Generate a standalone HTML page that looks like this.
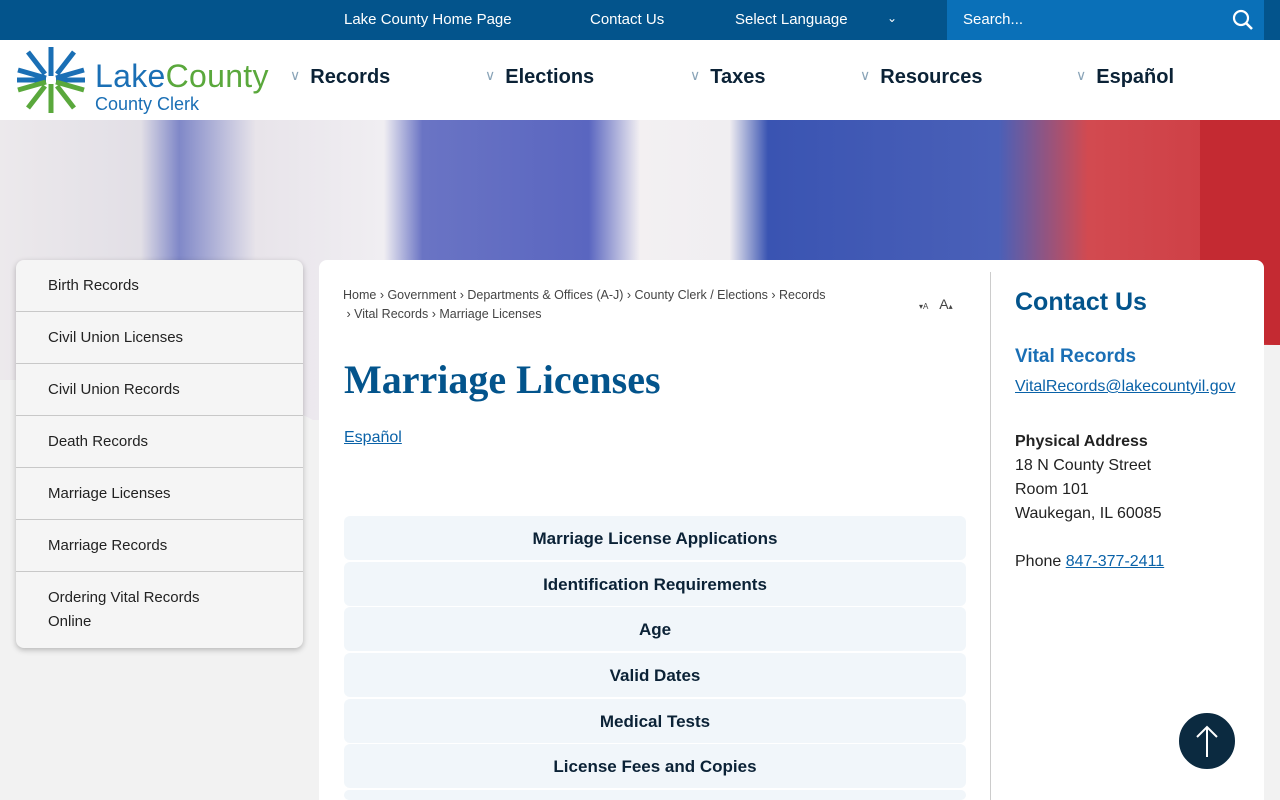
<!DOCTYPE html>
<html style="overflow:hidden;height:800px"><head><meta charset="utf-8"><style>
*{box-sizing:border-box;margin:0;padding:0}
body{width:1280px;height:800px;overflow:hidden;font-family:"Liberation Sans",sans-serif;background:#f2f2f2;position:relative}
.top{position:absolute;left:0;top:0;width:1280px;height:40px;background:#03548c;color:#fff;font-size:15px}
.top span{position:absolute;top:11px}
.search{position:absolute;left:947px;top:0;width:317px;height:40px;background:#0a70b8}
.hdr{position:absolute;top:40px;left:0;width:1280px;height:80px;background:#fff}
.nav{position:absolute;top:26px;font-size:20px;font-weight:bold;color:#0b2236}
.nav i{font-style:normal;color:#8aa4b8;font-weight:normal;font-size:14px;margin-right:10px;position:relative;top:-3px}
.banner{position:absolute;top:120px;left:0;width:1280px;height:300px;background:linear-gradient(90deg,#ece9ec 0%,#e2dfe6 11%,#8088c8 14%,#e8e4ea 20%,#f0eef2 30%,#6a74c4 33%,#5a66c0 46%,#f3f0f2 50%,#f0eef1 57%,#3a54b2 60%,#4a60b8 78%,#d24a50 85%,#cc3a40 100%)}
.side{position:absolute;left:16px;top:260px;width:287px;height:388px;background:#f5f5f5;border-radius:8px;box-shadow:0 2px 6px rgba(0,0,0,.25);overflow:hidden}
.side div{height:52px;border-bottom:1px solid #c8c8c8;padding:17px 32px;font-size:15px;color:#222}
.main{position:absolute;left:319px;top:260px;width:945px;height:560px;background:#fff;border-radius:8px}
.acc{position:absolute;left:344px;width:622px;height:44px;background:#f1f6fa;border-radius:6px;text-align:center;font-weight:bold;font-size:17px;color:#0b2236;line-height:46px}
a{color:#0a62a8;text-decoration:underline}
</style></head><body>
<div class="banner"></div>
<div style="position:absolute;left:0;top:380px;width:330px;height:60px;background:#f2f2f2;border-top-right-radius:300px 60px"></div>
<div style="position:absolute;left:1200px;top:345px;width:80px;height:100px;background:#f2f2f2"></div>
<div style="position:absolute;left:1200px;top:120px;width:80px;height:225px;background:#c42a32;border-bottom-left-radius:80px"></div>
<div class="top"><span style="left:344px">Lake County Home Page</span><span style="left:590px">Contact Us</span><span style="left:735px">Select Language</span><span style="left:887px;font-size:12px">&#8964;</span>
<div class="search"><span style="left:16px;top:11px;position:absolute">Search...</span>
<svg style="position:absolute;left:285px;top:9px" width="22" height="22" viewBox="0 0 22 22"><circle cx="9" cy="9" r="7" fill="none" stroke="#fff" stroke-width="2.2"/><path d="M14 14l6 6" stroke="#fff" stroke-width="2.6"/></svg></div></div>
<div class="hdr">
<svg style="position:absolute;left:16px;top:5px" width="70" height="70" viewBox="-35 -35 70 70">
<g stroke-width="5" stroke-linecap="butt">
<path d="M0-4V-33M-6-6l-17-22M6-6l17-22M-5-2l-28-8M5-2l28-8M-5 0H-34M5 0H34" stroke="#1a6fb5"/>
<path d="M0 4V33M-6 6l-17 22M6 6l17 22M-5 2l-28 8M5 2l28 8" stroke="#5aa83c"/></g></svg>
<div style="position:absolute;left:95px;top:18px;font-size:32px;color:#1a6fb5;letter-spacing:.3px">Lake<span style="color:#5aa83c">County</span></div>
<div style="position:absolute;left:95px;top:54px;font-size:18px;color:#1a6fb5">County Clerk</div>
<div class="nav" style="left:290px"><i>∨</i>Records</div>
<div class="nav" style="left:485px"><i>∨</i>Elections</div>
<div class="nav" style="left:690px"><i>∨</i>Taxes</div>
<div class="nav" style="left:860px"><i>∨</i>Resources</div>
<div class="nav" style="left:1076px"><i>∨</i>Español</div>
</div>
<div class="side"><div>Birth Records</div><div>Civil Union Licenses</div><div>Civil Union Records</div><div>Death Records</div><div>Marriage Licenses</div><div>Marriage Records</div><div style="border:0;line-height:24px;padding:14px 80px 0 32px;height:80px">Ordering Vital Records Online</div></div>
<div class="main">
<div style="position:absolute;left:24px;top:26px;font-size:12.5px;color:#444;line-height:19px">Home › Government › Departments &amp; Offices (A-J) › County Clerk / Elections › Records<br>&nbsp;› Vital Records › Marriage Licenses</div>
<div style="position:absolute;left:600px;top:36px;font-size:14px;color:#444"><small style="font-size:8px">▾A</small>&nbsp;&nbsp; A<small style="font-size:8px">▴</small></div>
<div style="position:absolute;left:25px;top:96px;font-family:'Liberation Serif',serif;font-weight:bold;font-size:40px;color:#03548c">Marriage Licenses</div>
<a style="position:absolute;left:25px;top:169px;font-size:16px">Español</a>
<div style="position:absolute;left:671px;top:12px;width:1px;height:540px;background:#ccc"></div>
<div style="position:absolute;left:696px;top:28px;font-size:25px;font-weight:bold;color:#03548c">Contact Us</div>
<div style="position:absolute;left:696px;top:86px;font-size:19px;font-weight:bold;color:#1a6fb5">Vital Records</div>
<a style="position:absolute;left:696px;top:118px;font-size:16px">VitalRecords@lakecountyil.gov</a>
<div style="position:absolute;left:696px;top:170px;font-size:16px;line-height:24px;color:#222"><b>Physical Address</b><br>18 N County Street<br>Room 101<br>Waukegan, IL 60085<br><br>Phone <a>847-377-2411</a></div>
</div>
<div class="acc" style="top:516px">Marriage License Applications</div>
<div class="acc" style="top:562px">Identification Requirements</div>
<div class="acc" style="top:607px">Age</div>
<div class="acc" style="top:653px">Valid Dates</div>
<div class="acc" style="top:699px">Medical Tests</div>
<div class="acc" style="top:744px">License Fees and Copies</div>
<div class="acc" style="top:790px;height:10px"></div>
<div style="position:absolute;left:1177px;top:711px;width:60px;height:60px;border-radius:50%;background:#0b2a40;border:2px solid #fff"><svg width="56" height="56" viewBox="0 0 56 56"><path d="M28 14V44M18 24l10-10 10 10" stroke="#fff" stroke-width="2" fill="none"/></svg></div>
</body></html>
